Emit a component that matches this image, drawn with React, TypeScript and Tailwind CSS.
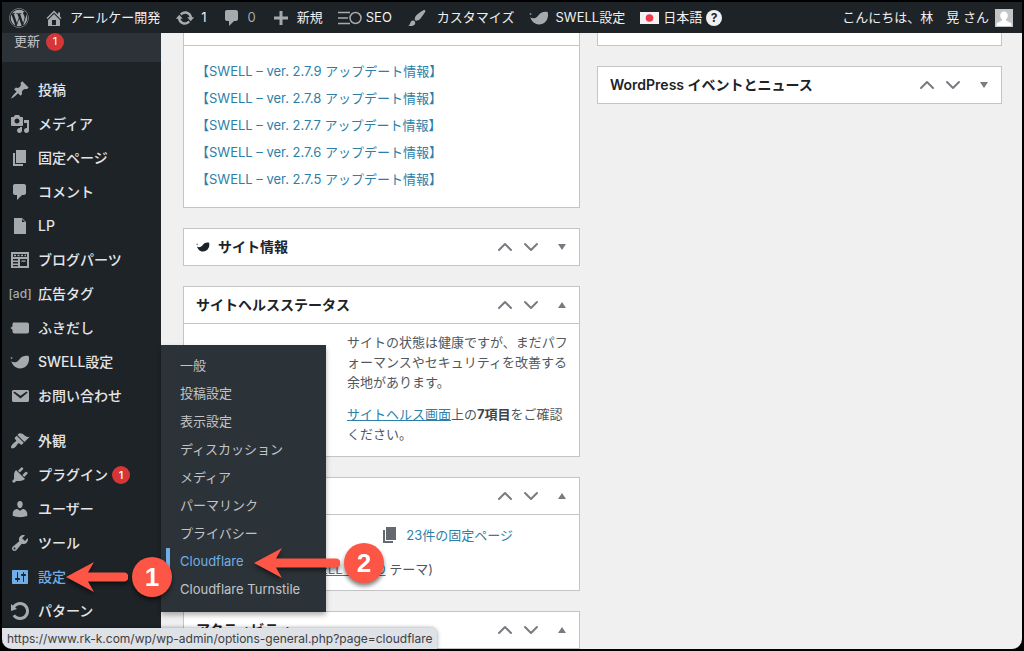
import React from 'react';
import clsx from 'clsx';
import { FaWordpress } from 'react-icons/fa';
import { ChevronDown, ChevronUp } from 'lucide-react';

const icons = {
  post: 'M10.44 3.02l1.82-1.82 6.36 6.35-1.83 1.82c-1.05-.68-2.48-.57-3.41.36l-.75.75c-.92.93-1.04 2.35-.35 3.41l-1.83 1.82-2.41-2.41-2.8 2.79c-.42.42-3.38 2.71-3.8 2.29s1.86-3.39 2.28-3.81l2.79-2.79L4.1 9.36l1.83-1.82c1.05.69 2.48.57 3.4-.36l.75-.75c.93-.92 1.05-2.35.36-3.41z',
  media: 'M13 11V4c0-.55-.45-1-1-1h-1.67L9 1H5L3.67 3H2c-.55 0-1 .45-1 1v7c0 .55.45 1 1 1h10c.55 0 1-.45 1-1zM7 4.5c1.38 0 2.5 1.12 2.5 2.5S8.38 9.5 7 9.5 4.5 8.38 4.5 7 5.62 4.5 7 4.5zM14 6h5v10.5c0 1.38-1.12 2.5-2.5 2.5S14 17.88 14 16.5s1.12-2.5 2.5-2.5c.17 0 .34.02.5.05V9h-3V6zm-4 8.05V13h2v3.5c0 1.38-1.12 2.5-2.5 2.5S7 17.88 7 16.5 8.12 14 9.5 14c.17 0 .34.02.5.05z',
  page: 'M6 15V2h10v13H6zm-1 1h8v2H3V5h2v11z',
  comment: 'M5 2h9c1.1 0 2 .9 2 2v7c0 1.1-.9 2-2 2h-2l-5 5v-5H5c-1.1 0-2-.9-2-2V4c0-1.1.9-2 2-2z',
  file: 'M12 2l4 4v12H4V2h8zm0 4h3l-3-3v3z',
  blog: 'M1 2h18v16H1V2zm2 2v3h14V4H3zm1 .8h2v1.4H4V4.8zm3.5 0h2v1.4h-2V4.8zm3.500 0h2v1.4h-2V4.8zm3.500 0h1.500v1.4h-1.500V4.8zM3 9v1.500h5V9H3zm0 3v1.500h5V12H3zm0 3v1.300h5V15H3zm7-6v7h7V9h-7zm1.500 1.500h4v1.200h-4v-1.200z',
  balloon: 'M4 4.500h13c1.100 0 2 .9 2 2v7c0 1.100-.9 2-2 2H4.500c-1.100 0-2-.9-2-2v-1.800L.5 10l2-1.700V6c0-.9.600-1.500 1.500-1.500z',
  swell: 'M.8 5.200l1.600.3-.2 1.500-1.500-.5zM1.300 9.300c1.500 1.200 4 1.300 6 .1 2.300-1.300 2.600-3.400 4.900-4.700 2-1.100 4.600-1.200 6.500-.7.900 3.600.2 7.200-2.200 9.700-2.700 2.900-7 3.500-10.200 1.900-2.500-1.200-4.200-3.600-5-6.300z',
  mail: 'M3.87 4h13.25C18.37 4 19 4.59 19 5.79v8.42c0 1.19-.63 1.79-1.88 1.79H3.87c-1.25 0-1.88-.6-1.88-1.79V5.79c0-1.2.63-1.79 1.88-1.79zm6.62 8.6l6.74-5.53c.24-.2.43-.66.13-1.07-.29-.41-.82-.42-1.17-.17l-5.7 3.86L4.8 5.83c-.35-.25-.88-.24-1.17.17-.3.41-.11.87.13 1.07z',
  appearance: 'M14.48 11.06L7.41 3.99l1.5-1.5c.5-.56 2.3-.47 3.51.32 1.21.8 1.43 1.28 2.91 2.1 1.18.64 2.45 1.26 4.45.85zm-.71.71L6.7 4.7 4.93 6.47c-.39.39-.39 1.02 0 1.41l1.06 1.06c.39.39.39 1.03 0 1.42-.6.6-1.43 1.11-2.21 1.69-.35.26-.7.53-1.01.84C1.43 14.23.4 16.08 1.4 17.07c.99 1 2.84-.03 4.18-1.36.31-.31.58-.66.85-1.02.57-.78 1.08-1.61 1.69-2.21.39-.39 1.02-.39 1.41 0l1.06 1.06c.39.39 1.02.39 1.41 0z',
  plugin: 'M13.11 4.36L9.87 7.6 8 5.73l3.24-3.24c.35-.34 1.05-.2 1.56.32.52.51.66 1.21.31 1.55zm-8 1.77l.91-1.12 9.01 9.01-1.19.84c-.71.71-2.63 1.16-3.82 1.16H6.14L4.9 17.26c-.59.59-1.54.59-2.12 0-.59-.58-.59-1.53 0-2.12l1.24-1.24v-3.88c0-1.13.4-3.19 1.09-3.89zm7.26 3.97l3.24-3.24c.34-.35 1.04-.21 1.55.31.52.51.66 1.21.31 1.55l-3.24 3.25z',
  user: 'M10 9.25c-2.27 0-2.73-3.44-2.73-3.44C7 4.02 7.82 2 9.97 2c2.16 0 2.98 2.02 2.71 3.81 0 0-.41 3.44-2.68 3.44zm0 2.57L12.72 10c2.39 0 4.52 2.33 4.52 4.53v2.49s-3.65 1.13-7.24 1.13c-3.65 0-7.24-1.13-7.24-1.13v-2.49c0-2.25 1.94-4.48 4.47-4.48z',
  tools: 'M16.68 9.77c-1.34 1.34-3.3 1.67-4.95.99l-5.41 6.52c-.99.99-2.59.99-3.58 0s-.99-2.59 0-3.57l6.52-5.42c-.68-1.65-.35-3.61.99-4.95 1.28-1.28 3.12-1.62 4.72-1.06l-2.89 2.89 2.82 2.82 2.86-2.87c.53 1.58.18 3.39-1.08 4.65zM3.81 16.21c.4.39 1.04.39 1.43 0 .4-.4.4-1.04 0-1.43-.39-.4-1.03-.4-1.43 0-.39.39-.39 1.03 0 1.43z',
  settings: 'M18 16V4c0-.55-.45-1-1-1H3c-.55 0-1 .45-1 1v12c0 .55.45 1 1 1h14c.55 0 1-.45 1-1zM8 11h1c.55 0 1 .45 1 1s-.45 1-1 1H8v1.5c0 .28-.22.5-.5.5s-.5-.22-.5-.5V13H6c-.55 0-1-.45-1-1s.45-1 1-1h1V5.5c0-.28.22-.5.5-.5s.5.22.5.5V11zm5-2h-1c-.55 0-1-.45-1-1s.45-1 1-1h1V5.5c0-.28.22-.5.5-.5s.5.22.5.5V7h1c.55 0 1 .45 1 1s-.45 1-1 1h-1v5.5c0 .28-.22.5-.5.5s-.5-.22-.5-.5V9z',
  rotate: 'M10.25 1.02c5.1 0 8.75 4.04 8.75 9s-3.65 9-8.75 9c-3.2 0-6.02-1.59-7.68-3.99l2.59-1.52c1.1 1.5 2.86 2.51 4.84 2.51 3.3 0 6-2.79 6-6s-2.7-6-6-6c-1.97 0-3.72 1-4.82 2.49L7 8.02l-6 2v-7L2.89 4.6c1.69-2.17 4.36-3.58 7.36-3.58z',
  home: 'M16 8.5l1.53 1.53-1.06 1.06L10 4.6l-6.47 6.49-1.06-1.06L10 2.5l4 4v-2h2v4zm-6-2.46l6 5.99V18H4v-5.97zM12 17v-5H8v5h4z',
  update: 'M10.2 3.28c3.53 0 6.43 2.61 6.92 6h2.08l-3.5 4-3.5-4h2.32c-.45-1.97-2.21-3.45-4.32-3.45-1.45 0-2.73.71-3.54 1.78L4.95 5.66C6.23 4.2 8.11 3.28 10.2 3.28zm-.4 13.44c-3.52 0-6.43-2.61-6.92-6H.8l3.5-4c1.17 1.33 2.33 2.67 3.5 4H5.48c.45 1.97 2.21 3.45 4.32 3.45 1.45 0 2.73-.71 3.54-1.78l1.71 1.95c-1.28 1.46-3.15 2.38-5.25 2.38z',
  plus: 'M17 8.500v3h-5.500V17h-3v-5.500H3v-3h5.500V3h3v5.500H17z',
  brush: 'M18.33 3.57s.27-.8-.31-1.36c-.53-.52-1.22-.24-1.22-.24-.61.3-5.76 3.47-7.67 5.57-.86.96-2.06 3.79-1.09 4.82.92.98 3.96-.17 4.79-1 2.06-2.06 5.21-7.17 5.5-7.79zM1.4 17.65c2.37-1.56 1.46-3.41 3.23-4.64.93-.65 2.22-.62 3.08.29.63.67.8 2.57-.16 3.46-1.57 1.45-4 1.55-6.15.89z',
};

type IconName = keyof typeof icons;

function Icon({ name, className = 'w-5 h-5' }: { name: IconName; className?: string }) {
  return (
    <svg viewBox="0 0 20 20" fill="currentColor" fillRule="evenodd" aria-hidden="true" className={clsx('shrink-0', className)}>
      <path d={icons[name]} />
    </svg>
  );
}

function Badge() {
  return (
    <span className="w-[18px] h-[18px] rounded-full bg-[#d63638] text-white text-[11px] leading-none flex items-center justify-center">1</span>
  );
}

function Arrow({ label, className, shaft }: { label: string; className: string; shaft: number }) {
  return (
    <div className={clsx('absolute z-20 flex items-center pointer-events-none drop-shadow-[0_3px_2px_rgba(0,0,0,0.5)]', className)}>
      <svg width={shaft} height="32" fill="#fd5646">
        <path d={`M0 16L28 1L22 11.500H${shaft - 4}a4.500 4.500 0 0 1 0 9H22L28 31z`} />
      </svg>
      <span className="w-10 h-10 ml-1 rounded-full bg-[#fd5646] text-white text-[26px] leading-none font-bold font-['Liberation_Sans',sans-serif] flex items-center justify-center">
        {label}
      </span>
    </div>
  );
}

const menu: { name: string; icon: IconName | 'ad'; badge?: boolean }[] = [
  { name: '投稿', icon: 'post' },
  { name: 'メディア', icon: 'media' },
  { name: '固定ページ', icon: 'page' },
  { name: 'コメント', icon: 'comment' },
  { name: 'LP', icon: 'file' },
  { name: 'ブログパーツ', icon: 'blog' },
  { name: '広告タグ', icon: 'ad' },
  { name: 'ふきだし', icon: 'balloon' },
  { name: 'SWELL設定', icon: 'swell' },
  { name: 'お問い合わせ', icon: 'mail' },
];

const adminMenu: typeof menu = [
  { name: '外観', icon: 'appearance' },
  { name: 'プラグイン', icon: 'plugin', badge: true },
  { name: 'ユーザー', icon: 'user' },
  { name: 'ツール', icon: 'tools' },
  { name: '設定', icon: 'settings' },
  { name: 'パターン', icon: 'rotate' },
];

const settingsMenu = ['一般', '投稿設定', '表示設定', 'ディスカッション', 'メディア', 'パーマリンク', 'プライバシー', 'Cloudflare', 'Cloudflare Turnstile'];

const versions = ['2.7.9', '2.7.8', '2.7.7', '2.7.6', '2.7.5'];

function SettingsFlyout() {
  return (
    <ul className="absolute left-full -bottom-[18px] w-[165px] pt-[7px] pb-2 bg-[#2c3338] shadow-[0_3px_5px_rgba(0,0,0,0.3)]">
      {settingsMenu.map((name) => {
        const isActive = name === 'Cloudflare';
        return (
          <li key={name} className="relative pl-[5px]">
            <a
              href="#"
              className={clsx(
                'flex items-center h-7 pl-2.5 border-l-4 text-[13px]',
                isActive ? 'border-[#72aee6] text-[#72aee6]' : 'border-transparent text-[#c3c4c7]'
              )}
            >
              {name}
            </a>
            {isActive && <Arrow label="2" shaft={86} className="left-[93px] -top-[5px]" />}
          </li>
        );
      })}
    </ul>
  );
}

function MenuList({ items }: { items: typeof menu }) {
  return (
    <ul>
      {items.map((item) => {
        const isActive = item.name === '設定';
        return (
          <li key={item.name} className="relative">
            <a
              href="#"
              className={clsx('flex items-center h-[34px] pl-2 text-sm font-medium', isActive ? 'text-[#72aee6]' : 'text-[#e4e5e7]')}
            >
              {item.icon === 'ad' ? (
                <span className="w-5 text-xs text-[#a7aaad] flex justify-center">[ad]</span>
              ) : (
                <Icon name={item.icon} className={clsx('w-5 h-5', !isActive && 'text-[#a7aaad]')} />
              )}
              <span className="ml-2 mr-1">{item.name}</span>
              {item.badge && <Badge />}
            </a>
            {isActive && (
              <>
                <SettingsFlyout />
                <Arrow label="1" shaft={62} className="left-16 -top-[3px]" />
              </>
            )}
          </li>
        );
      })}
    </ul>
  );
}

function PanelHeader({ title, icon, open }: { title?: string; icon?: IconName; open?: boolean }) {
  return (
    <div className="flex items-center justify-end h-9 pl-3 pr-[9px]">
      {title && (
        <h2 className="flex-1 flex items-center gap-2 text-sm font-semibold text-[#1d2327]">
          {icon && <Icon name={icon} className="w-[14px] h-[14px]" />}
          {title}
        </h2>
      )}
      <div className="flex items-center text-[#787c82]">
        <button aria-label="上に移動" className="w-[26px] flex justify-center">
          <ChevronUp className="w-6 h-6" strokeWidth={2} />
        </button>
        <button aria-label="下に移動" className="w-[26px] flex justify-center">
          <ChevronDown className="w-6 h-6" strokeWidth={2} />
        </button>
        <button aria-label="パネルを切り替え" className="w-4 ml-2.5 flex justify-center">
          <svg viewBox="0 0 10 8" className="w-2.5 h-2" fill="currentColor">
            <path d={open ? 'M5 1L9 7H1z' : 'M1 1H9L5 7z'} />
          </svg>
        </button>
      </div>
    </div>
  );
}

function Panel({ children, ...header }: { title?: string; icon?: IconName; open?: boolean; children?: React.ReactNode }) {
  return (
    <section className="bg-white border border-[#c3c4c7]">
      <PanelHeader {...header} />
      {children && <div className="border-t border-[#c3c4c7]">{children}</div>}
    </section>
  );
}

function Toolbar() {
  return (
    <header className="relative z-20 flex items-center justify-between h-[31px] shrink-0 pl-[7px] pr-[9px] bg-[#1d2327] text-[13px] text-[#f0f0f1] whitespace-nowrap">
      <nav className="flex items-center gap-[15px]">
        <a href="#" aria-label="WordPress"><FaWordpress className="w-5 h-5 text-[#a7aaad]" /></a>
        <a href="#" className="flex items-center gap-1.5"><Icon name="home" className="w-5 h-5 text-[#a7aaad]" />アールケー開発</a>
        <a href="#" className="flex items-center gap-1.5"><Icon name="update" className="w-5 h-5 text-[#a7aaad]" />1</a>
        <a href="#" className="flex items-center gap-1.5 text-[#a7aaad]"><Icon name="comment" />0</a>
        <a href="#" className="flex items-center gap-1.5"><Icon name="plus" className="w-5 h-5 text-[#a7aaad]" />新規</a>
        <a href="#" className="flex items-center gap-1">
          <svg viewBox="0 0 24 16" className="w-6 h-4 text-[#a7aaad]" fill="none" stroke="currentColor" strokeWidth="1.500">
            <path d="M0 2.500H12M0 8H10M0 13.500H12" />
            <circle cx="17.500" cy="8" r="5.500" />
          </svg>
          SEO
        </a>
        <a href="#" className="flex items-center gap-2.5"><Icon name="brush" className="w-5 h-5 text-[#a7aaad]" />カスタマイズ</a>
        <a href="#" className="flex items-center gap-1.5"><Icon name="swell" className="w-5 h-5 text-[#a7aaad]" />SWELL設定</a>
        <a href="#" className="flex items-center gap-1">
          <svg viewBox="0 0 19 12" className="w-[19px] h-3">
            <path fill="#f3f3f3" d="M0 0h19v12H0z" />
            <circle cx="9.500" cy="6" r="3.800" fill="#f03a4b" />
          </svg>
          日本語
          <span className="w-4 h-4 rounded-full bg-[#f0f0f1] text-[#1d2327] text-xs font-bold leading-none flex items-center justify-center">?</span>
        </a>
      </nav>
      <a href="#" className="flex items-center gap-1.5">
        こんにちは、林　晃 さん
        <svg viewBox="0 0 18 18" className="w-[18px] h-[18px]">
          <path fill="#c3c4c7" d="M0 0h18v18H0z" />
          <path fill="#fff" d="M9 2.500c2.400 0 3.800 1.800 3.800 4 0 1.600-.7 3-1.800 3.800v1.200l4.500 2.200c.7.400 1 1 1 1.800V17H1.500v-1.500c0-.8.3-1.400 1-1.800L7 11.500v-1.200C5.900 9.500 5.200 8.100 5.200 6.500c0-2.200 1.400-4 3.800-4z" />
        </svg>
      </a>
    </header>
  );
}

export default function App() {
  return (
    <div lang="ja" className="h-screen bg-black p-0.5 font-['Inter','Noto_Sans_CJK_JP',sans-serif]">
      <div className="relative h-full flex flex-col overflow-hidden rounded-b-[10px] bg-[#f0f0f1]">
        <Toolbar />

        <div className="flex flex-1 min-h-0">
          {/* Admin menu */}
          <aside className="relative z-10 w-[159px] shrink-0 bg-[#1d2327] whitespace-nowrap">
            <div className="h-[29px] pl-3 pb-3 flex items-center gap-1.5 bg-[#2c3338] text-[13px] text-[#c3c4c7]">
              <a href="#">更新</a>
              <Badge />
            </div>
            <nav className="pt-[11px] flex flex-col gap-[11px]">
              <MenuList items={menu} />
              <MenuList items={adminMenu} />
            </nav>
          </aside>

          {/* Dashboard panels */}
          <main className="flex-1 min-w-0 pl-[22px] pr-5 grid grid-cols-[397fr_405fr] gap-[17px] items-start">
            <div className="flex flex-col gap-5">
              <section className="bg-white border border-t-0 border-[#c3c4c7]">
                <div className="h-[13px] border-b border-[#c3c4c7]" />
                <ul className="px-3 pt-3 pb-[14px]">
                  {versions.map((version) => (
                    <li key={version} className="h-[27px] flex items-center text-[13px]">
                      <a href="#" className="text-[#2b7fa9]">【SWELL – ver. {version} アップデート情報】</a>
                    </li>
                  ))}
                </ul>
              </section>

              <Panel title="サイト情報" icon="swell" />

              <Panel title="サイトヘルスステータス" open>
                <div className="flex justify-end pt-2 pb-3 pr-[11px] text-[13px] leading-5 text-[#50575e] whitespace-nowrap">
                  <div className="w-[221px]">
                    <p>
                      サイトの状態は健康ですが、まだパフ<br />
                      ォーマンスやセキュリティを改善する<br />
                      余地があります。
                    </p>
                    <p className="mt-3">
                      <a href="#" className="text-[#2b7fa9] underline">サイトヘルス画面</a>上の<strong className="text-[#3c434a]">7項目</strong>をご確認<br />
                      ください。
                    </p>
                  </div>
                </div>
              </Panel>

              <Panel open>
                <div className="pt-2.5 pb-[11px] text-[13px] leading-5 text-[#50575e] whitespace-nowrap">
                  <a href="#" className="ml-auto mr-[66px] w-fit flex items-center gap-1.5 text-[#2b7fa9]">
                    <Icon name="page" className="w-5 h-5 text-[#646970]" />
                    23件の固定ページ
                  </a>
                  <p className="mt-[14px] mr-[146px] text-right">
                    <a href="#" className="text-[#2b7fa9] underline">SWELL CHILD</a> テーマ)
                  </p>
                </div>
              </Panel>

              <Panel title="アクティビティ" open>
                <div className="h-10" />
              </Panel>
            </div>

            <div className="flex flex-col gap-5">
              <section className="h-[13px] bg-white border border-t-0 border-[#c3c4c7]" />
              <Panel title="WordPress イベントとニュース" />
            </div>
          </main>
        </div>

        {/* Link target shown by the browser */}
        <div className="absolute left-0 bottom-0 z-30 h-[21px] pl-[5px] pr-1 flex items-center rounded-tr-md bg-[#dee1e6] text-xs text-[#3c4043] shadow-[0_0_4px_rgba(0,0,0,0.4)]">
          https://www.rk-k.com/wp/wp-admin/options-general.php?page=cloudflare
        </div>
      </div>
    </div>
  );
}
